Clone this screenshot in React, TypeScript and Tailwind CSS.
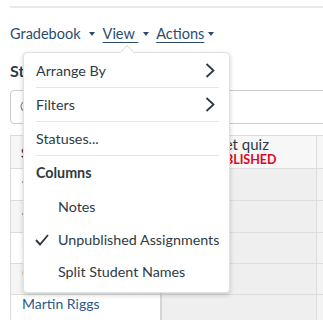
import { Search } from "lucide-react";

const rows = [
  { name: "Alex Murtaugh", h: "h-[32px]", bg: "bg-white" },
  { name: "Amy Sheridan", h: "h-[32px]", bg: "bg-[#f5f5f5]" },
  { name: "Ben Kowalski", h: "h-[31px]", bg: "bg-white" },
  { name: "Carol Dean", h: "h-[31px]", bg: "bg-[#f5f5f5]" },
  { name: "Martin Riggs", h: "h-[32px]", bg: "bg-white" },
];

function Caret() {
  return (
    <svg width="6" height="4" viewBox="0 0 6 4" className="fill-[#2b4c72]">
      <path d="M0 0h6L3 4z" />
    </svg>
  );
}

function Chevron() {
  return (
    <svg width="10" height="15" viewBox="0 0 10 15" fill="none">
      <path d="M1.5 1l7 6.5-7 6.5" stroke="#2d3b45" strokeWidth="1.8" />
    </svg>
  );
}

function Check() {
  return (
    <svg width="14" height="12" viewBox="0 0 14 12" fill="none">
      <path d="M1 6l4 4.5L13 1" stroke="#2d3b45" strokeWidth="1.9" />
    </svg>
  );
}

function MenuItem({ label, sep, chevron }: { label: string; sep?: boolean; chevron?: boolean }) {
  return (
    <div className="px-[12px] pr-[10px]">
      <div
        className={`flex items-center justify-between h-[34px] ${
          sep ? "border-b border-[#e4e6e8]" : ""
        }`}
      >
        <span>{label}</span>
        {chevron && (
          <span className="pr-[4px]">
            <Chevron />
          </span>
        )}
      </div>
    </div>
  );
}

function ViewMenu() {
  return (
    <div className="absolute left-[23px] top-[52px] w-[207px] h-[241px] bg-white rounded-[4px] border border-[#dfe2e5] shadow-[0_2px_5px_rgba(0,0,0,0.18)] pt-[1px] text-[14.3px] text-[#2d3b45]">
      <div className="absolute -top-[6px] left-[98px] w-[10px] h-[10px] rotate-45 bg-white border-l border-t border-[#dfe2e5]" />
      <MenuItem label="Arrange By" sep chevron />
      <MenuItem label="Filters" sep chevron />
      <MenuItem label="Statuses..." sep />
      <div className="px-[12px] h-[34px] flex items-center font-bold">Columns</div>
      <div className="pl-[34px] h-[34px] flex items-center">Notes</div>
      <div className="pl-[11px] h-[32px] flex items-center gap-[9px]">
        <Check />
        <span>Unpublished Assignments</span>
      </div>
      <div className="pl-[34px] h-[32px] flex items-center">Split Student Names</div>
    </div>
  );
}

export default function App() {
  return (
    <div className="relative w-[323px] h-[320px] overflow-hidden bg-white font-['Lato',sans-serif] text-[#2d3b45]">
      <div className="pt-[6px] pl-[10px]">
        <div className="h-[2px] bg-[#e6e8ea]" />
      </div>

      <nav className="flex items-center pl-[10px] mt-[14px] h-[24px] text-[14.5px] text-[#2b4c72]">
        <span>Gradebook</span>
        <span className="ml-[8px]">
          <Caret />
        </span>
        <span className="ml-[8px] underline underline-offset-[3px]">View&nbsp;</span>
        <span className="ml-[5px]">
          <Caret />
        </span>
        <span className="ml-[7px] underline underline-offset-[3px]">Actions</span>
        <span className="ml-[4px]">
          <Caret />
        </span>
      </nav>

      <div className="pl-[10px] mt-[13px] h-[24px] text-[16px] font-bold leading-[24px]">
        Student Names
      </div>

      <div className="ml-[10px] mt-[7px] w-[400px] h-[34px] border border-[#c7cdd1] rounded-[4px] flex items-center pl-[8px] text-[#73818c]">
        <Search size={16} strokeWidth={1.6} />
        <span className="ml-[6px] text-[14px]">Search Students</span>
      </div>

      <div className="ml-[10px] mt-[11px] w-[400px] border-t border-l border-[#dcdcdc]">
        <div className="flex h-[33px] border-b border-[#dcdcdc] bg-[#f7f7f7]">
          <div className="w-[151px] border-r-2 border-[#d5d5d5] pl-[10px] flex items-center text-[14px] font-bold">
            Student Name
          </div>
          <div className="w-[155px] border-r border-[#dcdcdc] pl-[27px] flex flex-col justify-center leading-[16px]">
            <span className="text-[15px] -ml-[5px]">Mindset quiz</span>
            <span className="text-[12.5px] font-bold text-[#e0061f]">UNPUBLISHED</span>
          </div>
          <div className="flex-1" />
        </div>
        {rows.map((r) => (
          <div key={r.name} className={`flex ${r.h} border-b border-[#dcdcdc]`}>
            <div
              className={`w-[151px] ${r.bg} border-r-2 border-[#d5d5d5] pl-[11px] text-[14px] leading-[18px] text-[#2b5a8a]`}
            >
              {r.name}
            </div>
            <div className="w-[155px] bg-[#efefef] border-r border-[#dcdcdc]" />
            <div className="flex-1 bg-[#f3f3f3]" />
          </div>
        ))}
      </div>

      <ViewMenu />
    </div>
  );
}
